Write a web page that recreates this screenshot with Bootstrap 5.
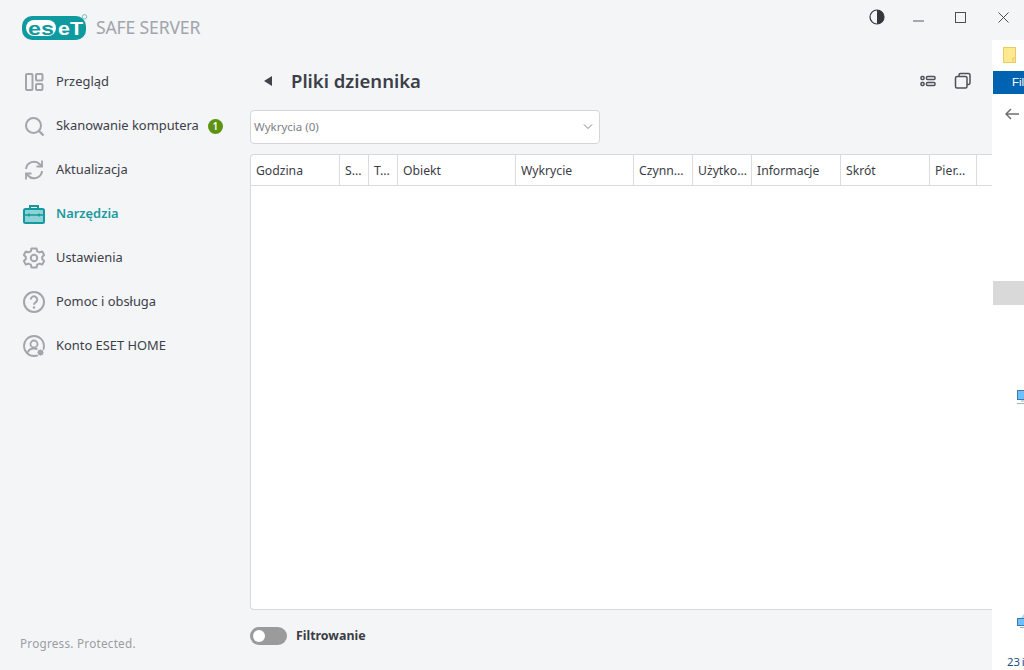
<!DOCTYPE html>
<html lang="pl">
<head>
<meta charset="utf-8">
<title>ESET Safe Server</title>
<link href="https://cdn.jsdelivr.net/npm/bootstrap@5.3.0/dist/css/bootstrap.min.css" rel="stylesheet">
<style>
html,body{height:670px;overflow:hidden}
body{background:#f4f5f7;font-family:"Noto Sans","Open Sans",sans-serif;font-size:12.9px;color:#3a3d45;position:relative}
.app-shell{width:1024px;height:670px}
.side-col{width:250px;flex:none;padding-top:60px}
.brand-row{position:absolute;left:22px;top:13px}
.brand-name{font-size:17.6px;color:#a1a5ab;letter-spacing:-.17px;margin-left:8px;line-height:28px;font-family:"Noto Sans",sans-serif}
.nav-item-x{height:44px;padding-left:23px;color:#3d4049;text-decoration:none}
.nav-item-x svg{flex:none;width:22px;height:22px;margin-right:11px}
.nav-item-x.active-x{color:#1a9aa0;font-weight:600}
.count-pill{width:15px;height:15px;border-radius:50%;background:#5d9212;color:#fff;font-size:10px;font-weight:600;line-height:15px;text-align:center;margin-left:9px}
.tagline{position:absolute;left:20px;top:635px;font-size:11.7px;color:#9a9da3;letter-spacing:.25px}
.win-ctrl{position:absolute;top:0;right:0;height:32px}
.win-ctrl svg{position:absolute}
.main-col{width:742px;flex:none;padding-top:60px}
.head-row{height:42px;padding-left:13px}
.head-title{font-size:18.500px;font-weight:600;color:#3b3f48;margin:0 0 0 18px;line-height:42px}
.head-tools{margin-left:auto;margin-right:20px;gap:18px}
.picker{width:350px;height:34px;background:#fff;border:1px solid #d5d6d9;border-radius:4px;margin-top:8px;padding:0 6px 0 3px;font-size:11.5px;color:#7d8087}
.grid-box{height:456px;margin-top:10px;background:#fff;border:1px solid #d8d9db;border-right:0;border-radius:4px 0 0 4px;overflow:hidden}
.grid-head{height:31px;border-bottom:1px solid #dcdcdf}
.grid-cell{flex:none;padding:1px 5px 0;line-height:29px;height:30px;border-right:1px solid #dcdcdf;color:#3a3d45;font-size:12.2px;white-space:nowrap;overflow:hidden}
.foot-row{height:52px;gap:9px}
.toggle-x{width:37px;height:18px;background:#9b9b9b;border-radius:9px;position:relative}
.toggle-x::before{content:"";position:absolute;left:3px;top:3px;width:12px;height:12px;background:#fff;border-radius:50%}
.foot-label{font-weight:700;font-size:12.4px;color:#3a3d45}
.back-window{position:absolute;left:992px;top:40px;width:32px;height:630px;background:#fff;overflow:hidden}
.back-ribbon{position:absolute;left:1px;top:31px;width:31px;height:23px;background:#0063b1;color:#fff;font-size:11.5px;padding-left:19px;line-height:23px;font-family:"Liberation Sans",sans-serif}
.back-sel{position:absolute;left:1px;top:241px;width:31px;height:24px;background:#d9d9d9}
.back-date{position:absolute;left:15px;top:613px;font-size:11.3px;line-height:17px;color:#1d4f7c;white-space:nowrap;word-spacing:-1px}
.back-window svg{position:absolute}
</style>
</head>
<body>
<div class="app-shell d-flex">
  <div class="brand-row d-flex align-items-center">
    <svg width="66" height="27" viewBox="0 0 66 27">
      <rect x="0" y="2" width="64" height="24" rx="10" fill="#0f9aa0"/>
      <rect x="4" y="6" width="30" height="16" rx="8" fill="#fff"/>
      <text x="6" y="20.500" font-family="Liberation Sans" font-weight="700" font-size="19" fill="#0f9aa0" textLength="26" lengthAdjust="spacingAndGlyphs">es</text>
      <text x="36" y="20.500" font-family="Liberation Sans" font-weight="700" font-size="19" fill="#fff" textLength="25" lengthAdjust="spacingAndGlyphs">eT</text>
      <circle cx="62.500" cy="2.800" r="2.200" fill="none" stroke="#6fc0c4" stroke-width="1"/>
    </svg>
    <span class="brand-name">SAFE SERVER</span>
  </div>

  <nav class="side-col d-flex flex-column">
    <a class="nav-item-x d-flex align-items-center" href="#">
      <svg viewBox="0 0 22 22" fill="none" stroke="#a3a5a8" stroke-width="2"><rect x="3" y="3" width="6.500" height="16" rx="1"/><rect x="13" y="3" width="6.500" height="6.500" rx="1"/><rect x="13" y="13" width="6.500" height="6" rx="1"/></svg>Przegląd</a>
    <a class="nav-item-x d-flex align-items-center" href="#">
      <svg viewBox="0 0 22 22" fill="none" stroke="#a3a5a8" stroke-width="2"><circle cx="10.500" cy="10.500" r="7.500"/><path d="M16 16l4.500 4.500" stroke-width="2.400"/></svg>Skanowanie komputera<span class="count-pill">1</span></a>
    <a class="nav-item-x d-flex align-items-center" href="#">
      <svg viewBox="0 0 22 22" fill="none" stroke="#a3a5a8" stroke-width="2"><path d="M3 10a8 8 0 0 1 14-4.500l1.500 1.500"/><path d="M19 12a8 8 0 0 1-14 4.500L3.500 15"/><path d="M19 1.500V7.500h-5.500" stroke-width="1.800"/><path d="M3 20.500V14.500h5.500" stroke-width="1.800"/></svg>Aktualizacja</a>
    <a class="nav-item-x active-x d-flex align-items-center" href="#">
      <svg viewBox="0 0 22 22"><rect x="1" y="6" width="20" height="14" rx="1.500" fill="#8ed2d5" stroke="#129aa0" stroke-width="2"/><path d="M7 6V3h8v3" fill="none" stroke="#129aa0" stroke-width="2"/><path d="M1 12h20" stroke="#129aa0" stroke-width="1.500"/><path d="M6 10.500v3M16 10.500v3" stroke="#129aa0" stroke-width="1.500"/></svg>Narzędzia</a>
    <a class="nav-item-x d-flex align-items-center" href="#">
      <svg viewBox="0 0 22 22" fill="none" stroke="#a3a5a8" stroke-width="2"><path d="M8.500 1.500h5l.7 2.800 2.400 1.100 2.600-1 2 3.600-2 1.900v2.200l2 1.900-2 3.600-2.600-1-2.400 1.100-.7 2.800h-5l-.7-2.800-2.400-1.100-2.600 1-2-3.600 2-1.900V9.900l-2-1.900 2-3.600 2.600 1 2.400-1.100z" stroke-linejoin="round"/><circle cx="11" cy="11" r="3.200"/></svg>Ustawienia</a>
    <a class="nav-item-x d-flex align-items-center" href="#">
      <svg viewBox="0 0 22 22" fill="none" stroke="#a3a5a8" stroke-width="2"><circle cx="11" cy="11" r="10"/><path d="M7.800 8.500a3.200 3.200 0 1 1 4.800 2.800c-1 .6-1.600 1.200-1.600 2.400"/><circle cx="11" cy="16.500" r="1.200" fill="#a3a5a8" stroke="none"/></svg>Pomoc i obsługa</a>
    <a class="nav-item-x d-flex align-items-center" href="#">
      <svg viewBox="0 0 22 22" fill="none" stroke="#a3a5a8" stroke-width="1.800"><circle cx="11" cy="11" r="10"/><circle cx="11" cy="9" r="3.500"/><path d="M4.500 18c.8-3 3-4.500 6.500-4.500 1.500 0 2.500.3 3.500.8"/><circle cx="17.500" cy="17.500" r="3.500" fill="#a3a5a8" stroke="#f4f5f7" stroke-width="1"/></svg>Konto ESET HOME</a>
  </nav>
  <div class="tagline">Progress. Protected.</div>

  <main class="main-col d-flex flex-column">
    <div class="head-row d-flex align-items-center">
      <svg width="10" height="12" viewBox="0 0 10 12"><path d="M9 1v10L1 6z" fill="#3f434c"/></svg>
      <h1 class="head-title">Pliki dziennika</h1>
      <div class="head-tools d-flex align-items-center">
        <svg width="16" height="14" viewBox="0 0 16 14" fill="none" stroke="#4d515a" stroke-width="1.500"><rect x="1" y="2.500" width="3" height="3" rx="1"/><rect x="1" y="8.500" width="3" height="3" rx="1"/><rect x="6.500" y="2.500" width="8.500" height="3" rx="1"/><rect x="6.500" y="8.500" width="8.500" height="3" rx="1"/></svg>
        <svg width="18" height="18" viewBox="0 0 18 18" fill="none" stroke="#4d515a" stroke-width="1.500"><rect x="1.500" y="4.500" width="11.500" height="11.500" rx="1.500"/><path d="M5 4V3a1.500 1.500 0 0 1 1.500-1.500h8A1.500 1.500 0 0 1 16 3v8a1.500 1.500 0 0 1-1.500 1.500H13"/></svg>
      </div>
    </div>
    <div class="picker d-flex align-items-center justify-content-between">
      <span>Wykrycia (0)</span>
      <svg width="10" height="6" viewBox="0 0 10 6" fill="none" stroke="#7d8087" stroke-width="1"><path d="M1 .5l4 4 4-4"/></svg>
    </div>
    <div class="grid-box">
      <div class="grid-head d-flex">
        <div class="grid-cell" style="width:89px">Godzina</div>
        <div class="grid-cell" style="width:29px">S...</div>
        <div class="grid-cell" style="width:29px">T...</div>
        <div class="grid-cell" style="width:118px">Obiekt</div>
        <div class="grid-cell" style="width:118px">Wykrycie</div>
        <div class="grid-cell" style="width:59px">Czynn...</div>
        <div class="grid-cell" style="width:59px">Użytko...</div>
        <div class="grid-cell" style="width:89px">Informacje</div>
        <div class="grid-cell" style="width:89px">Skrót</div>
        <div class="grid-cell" style="width:47px">Pier...</div>
      </div>
    </div>
    <div class="foot-row d-flex align-items-center">
      <div class="toggle-x"></div>
      <span class="foot-label">Filtrowanie</span>
    </div>
  </main>
</div>

<div class="win-ctrl" style="width:174px">
  <svg style="left:19px;top:9px" width="16" height="16" viewBox="0 0 16 16"><circle cx="8" cy="8" r="7" fill="#f4f5f7" stroke="#33363c" stroke-width="1.200"/><path d="M8 1a7 7 0 0 1 0 14z" fill="#33363c"/></svg>
  <svg style="left:63px;top:20px" width="11" height="2" viewBox="0 0 11 2"><path d="M0 1h11" stroke="#55585f" stroke-width="1"/></svg>
  <svg style="left:105px;top:12px" width="11" height="11" viewBox="0 0 11 11"><rect x=".5" y=".5" width="10" height="10" fill="none" stroke="#4b4e55"/></svg>
  <svg style="left:148px;top:12px" width="11" height="11" viewBox="0 0 11 11"><path d="M.5.500l10 10M10.500.500l-10 10" stroke="#4b4e55" stroke-width="1"/></svg>
</div>

<div class="back-window">
  <svg style="left:11px;top:7px" width="13" height="16" viewBox="0 0 13 16"><rect x=".5" y=".5" width="12" height="15" fill="#ffe98f" stroke="#eccb62"/><path d="M10 15v-4h2.500" fill="none" stroke="#eccb62"/></svg>
  <div class="back-ribbon">Fil</div>
  <svg style="left:13px;top:68px" width="14" height="12" viewBox="0 0 14 12" fill="none" stroke="#6f6f6f" stroke-width="1.500"><path d="M14 6H1M6 1L1 6l5 5"/></svg>
  <div class="back-sel"></div>
  <svg style="left:25px;top:350px" width="7" height="15" viewBox="0 0 7 15"><rect x=".5" y=".5" width="8" height="9" fill="#6fc0ff" stroke="#3f7aa8"/><path d="M4 11h4M0 13.500h8" stroke="#9eb2c2"/></svg>
  <svg style="left:25px;top:574px" width="7" height="15" viewBox="0 0 7 15"><path d="M4 4l3-4v4z" fill="#a8d8f5"/><rect x=".5" y="4.500" width="8" height="7" fill="#6fc0ff" stroke="#3f7aa8"/><path d="M3 13.500h5" stroke="#9eb2c2"/></svg>
  <div class="back-date">23 i</div>
</div>
<script src="https://cdn.jsdelivr.net/npm/bootstrap@5.3.0/dist/js/bootstrap.bundle.min.js"></script>
</body>
</html>
